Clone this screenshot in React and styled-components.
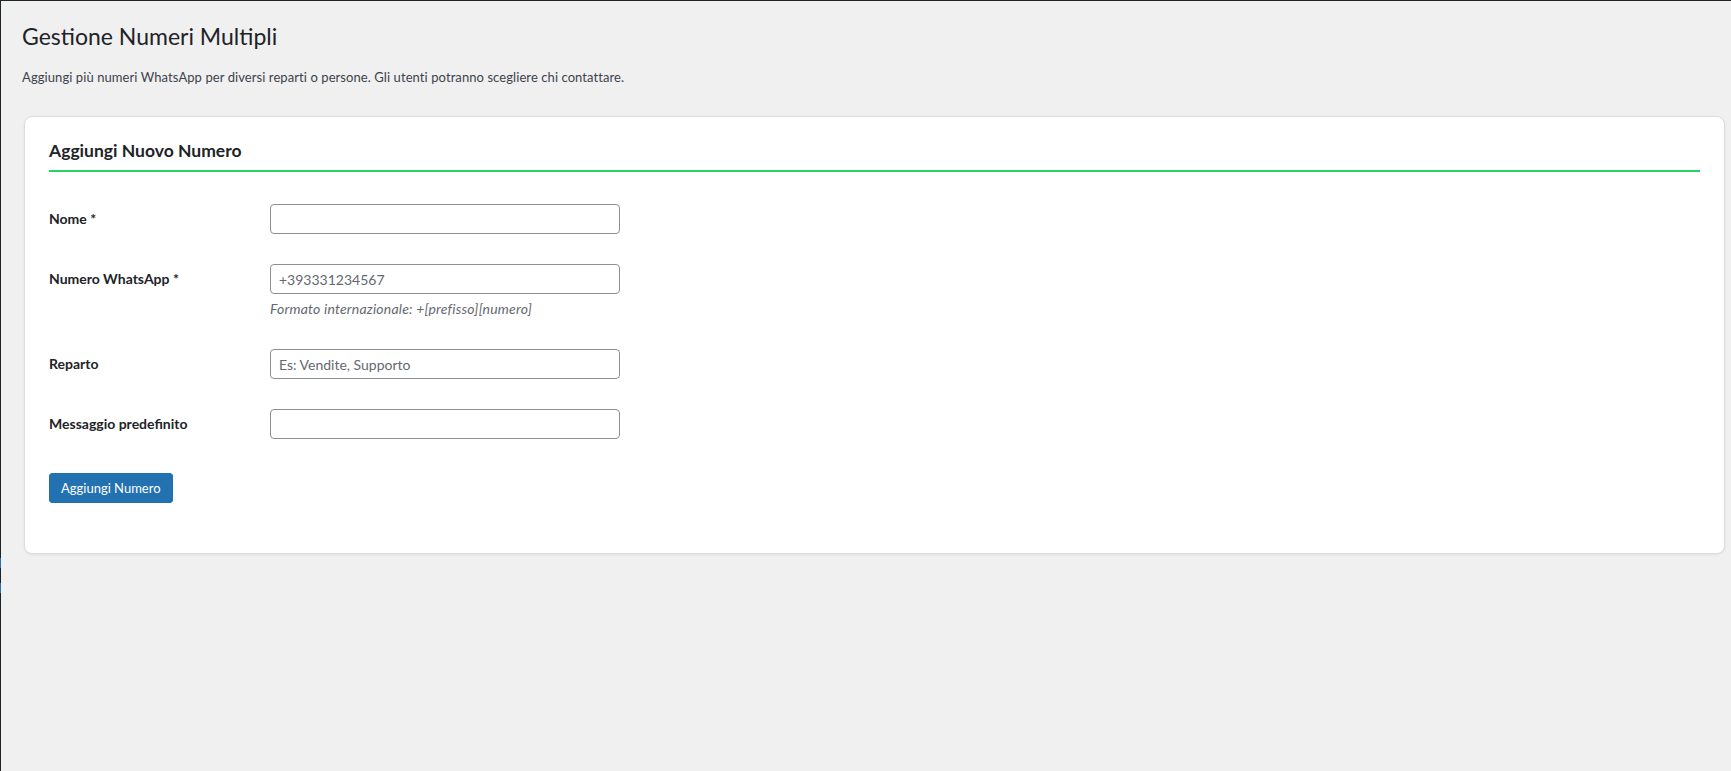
import styled, { createGlobalStyle } from "styled-components";

const GlobalStyle = createGlobalStyle`
  html, body {
    margin: 0;
    padding: 0;
    background: #f0f0f1;
  }
  body {
    font-family: Lato, "Liberation Sans", sans-serif;
    color: #3c434a;
    font-size: 13px;
  }
  * {
    box-sizing: border-box;
  }
`;

const Shell = styled.div`
  display: flex;
  min-height: 100vh;
  border-top: 1px solid #1d2327;
`;

// thin edge of the admin menu on the left
const Rail = styled.div`
  width: 1px;
  flex-shrink: 0;
  background: #1d2327;
  display: flex;
  flex-direction: column;
`;

const RailMark = styled.span`
  display: block;
  height: ${(p) => p.$h}px;
  margin-top: ${(p) => p.$top}px;
  background: #2271b1;
`;

const Main = styled.main`
  flex: 1;
  padding: 0 6px 0 21px;
`;

const Title = styled.h1`
  margin: 0;
  padding: 21px 0 6px;
  font-size: 23px;
  font-weight: 400;
  line-height: 1.3;
  color: #1d2327;
`;

const Intro = styled.p`
  margin: 10px 0 0;
  font-size: 13px;
  letter-spacing: 0.08px;
  line-height: 1.5;
  color: #3c434a;
`;

const Card = styled.section`
  margin: 29px 0 0 2px;
  background: #fff;
  border: 1px solid #dcdcde;
  border-radius: 8px;
  box-shadow: 0 1px 3px rgba(0, 0, 0, 0.06);
  padding: 22px 24px 50px;
`;

const CardTitle = styled.h2`
  margin: 0;
  padding-bottom: 7px;
  font-size: 17.5px;
  font-weight: 700;
  line-height: 24px;
  color: #1d2327;
  border-bottom: 2px solid #25d366;
`;

const FormTable = styled.div`
  margin-top: 17px;
`;

const FieldRow = styled.div`
  display: grid;
  grid-template-columns: 221px 350px;
  align-items: start;
  padding: 15px 0;
`;

const Label = styled.label`
  font-size: 14px;
  font-weight: 700;
  line-height: 30px;
  color: #1d2327;
`;

const Field = styled.div`
  display: flex;
  flex-direction: column;
`;

const TextInput = styled.input`
  width: 350px;
  height: 30px;
  margin: 0;
  padding: 0 8px;
  border: 1px solid #8c8f94;
  border-radius: 4px;
  background: #fff;
  font-family: inherit;
  font-size: 14px;
  color: #2c3338;
  outline: none;
  &::placeholder {
    color: #646970;
    opacity: 1;
  }
`;

const Hint = styled.p`
  margin: 5px 0 0;
  font-size: 14px;
  font-style: italic;
  letter-spacing: 0.2px;
  line-height: 20px;
  color: #646970;
`;

const Actions = styled.div`
  margin-top: 19px;
`;

const PrimaryButton = styled.button`
  height: 30px;
  padding: 0 11px;
  border: 1px solid #2271b1;
  border-radius: 3px;
  background: #2271b1;
  color: #fff;
  font-family: inherit;
  font-size: 13px;
  line-height: 28px;
  cursor: pointer;
`;

const fields = [
  { id: "nome", label: "Nome *" },
  {
    id: "numero",
    label: "Numero WhatsApp *",
    placeholder: "+393331234567",
    hint: "Formato internazionale: +[prefisso][numero]",
  },
  { id: "reparto", label: "Reparto", placeholder: "Es: Vendite, Supporto" },
  { id: "messaggio", label: "Messaggio predefinito" },
];

const App = () => {
  return (
    <>
      <GlobalStyle />
      <Shell>
        <Rail>
          <RailMark $top={557} $h={10} />
          <RailMark $top={15} $h={10} />
        </Rail>
        <Main>
          <Title>Gestione Numeri Multipli</Title>
          <Intro>
            Aggiungi più numeri WhatsApp per diversi reparti o persone. Gli
            utenti potranno scegliere chi contattare.
          </Intro>

          <Card>
            <CardTitle>Aggiungi Nuovo Numero</CardTitle>
            <FormTable>
              {fields.map((f) => (
                <FieldRow key={f.id}>
                  <Label htmlFor={f.id}>{f.label}</Label>
                  <Field>
                    <TextInput
                      id={f.id}
                      type="text"
                      placeholder={f.placeholder || ""}
                    />
                    {f.hint ? <Hint>{f.hint}</Hint> : null}
                  </Field>
                </FieldRow>
              ))}
            </FormTable>
            <Actions>
              <PrimaryButton type="button">Aggiungi Numero</PrimaryButton>
            </Actions>
          </Card>
        </Main>
      </Shell>
    </>
  );
};

export default App;
